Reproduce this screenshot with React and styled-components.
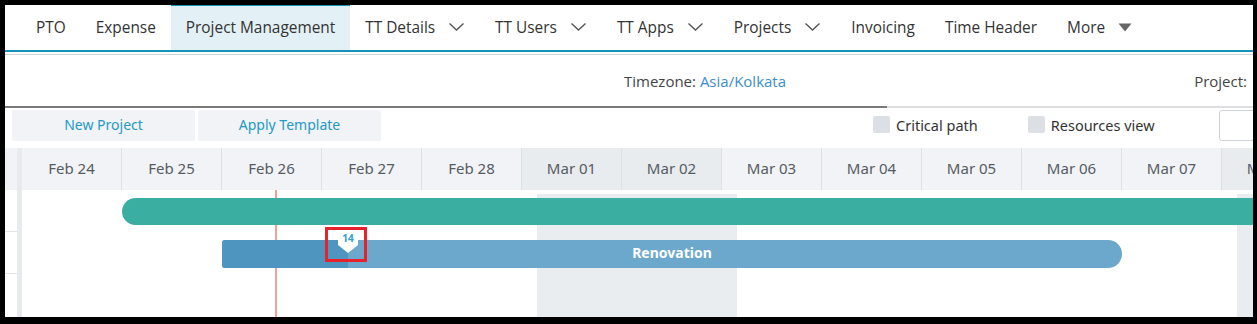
import React from "react";
import styled, { createGlobalStyle } from "styled-components";

const GlobalStyle = createGlobalStyle`
  html, body { margin: 0; padding: 0; background: #000; }
  * { box-sizing: border-box; }
`;

const Frame = styled.div`
  width: 1257px;
  height: 324px;
  padding: 5px 4px 7px 5px;
  background: #000;
`;

const Page = styled.div`
  width: 1248px;
  height: 312px;
  background: #fff;
  display: flex;
  flex-direction: column;
  overflow: hidden;
  font-family: "Open Sans", "Noto Sans", sans-serif;
`;

const Nav = styled.nav`
  display: flex;
  align-items: stretch;
  height: 47px;
  padding-left: 16px;
  border-bottom: 2px solid #1592b8;
  flex-shrink: 0;
`;

const NavItem = styled.div`
  display: flex;
  align-items: center;
  gap: 13px;
  padding: 0 15px 2px;
  font-size: 15.4px;
  color: #333;
  white-space: nowrap;
  flex-shrink: 0;
  background: ${(p) => (p.$active ? "#e3f1f6" : "transparent")};
  border-top: 1px solid ${(p) => (p.$active ? "#1592b8" : "transparent")};
`;

const Chevron = () => (
  <svg width="17" height="10" viewBox="0 0 17 10">
    <polyline points="1.5,1.5 8.5,8 15.5,1.5" fill="none" stroke="#555" strokeWidth="1.4" />
  </svg>
);

const Caret = () => (
  <svg width="14" height="9" viewBox="0 0 14 9">
    <polygon points="0.5,0.5 13.5,0.5 7,8.5" fill="#666" />
  </svg>
);

const ThinRule = styled.div`
  height: 1px;
  margin-top: 2px;
  background: #d4d4d4;
  flex-shrink: 0;
`;

const InfoRow = styled.div`
  display: flex;
  align-items: center;
  height: 51px;
  font-size: 15px;
  color: #444;
  flex-shrink: 0;
`;

const Timezone = styled.div`
  margin-left: 619px;
`;

const TzLink = styled.span`
  color: #3c8dc9;
`;

const ProjectLabel = styled.div`
  margin-left: auto;
  margin-right: 6px;
`;

const SplitRule = styled.div`
  display: flex;
  height: 2px;
  flex-shrink: 0;
`;

const RulePart = styled.div`
  height: 100%;
  width: ${(p) => p.$w};
  flex: ${(p) => (p.$grow ? 1 : "none")};
  background: ${(p) => p.$c};
`;

const Toolbar = styled.div`
  display: flex;
  align-items: flex-start;
  height: 40px;
  padding: 2px 0 0 7px;
  font-family: "Noto Sans", sans-serif;
  flex-shrink: 0;
  & > * { flex-shrink: 0; }
`;

const ToolButton = styled.div`
  width: 183px;
  height: 31px;
  margin-right: 3px;
  padding-bottom: 2px;
  display: flex;
  align-items: center;
  justify-content: center;
  background: #f2f3f6;
  border-radius: 2px;
  color: #1d9ac6;
  font-size: 14px;
`;

const CheckOption = styled.div`
  display: flex;
  align-items: center;
  gap: 6px;
  height: 31px;
  padding-bottom: 2px;
  margin-left: ${(p) => p.$ml}px;
  font-size: 14.5px;
  color: #333;
  white-space: nowrap;
`;

const CheckBox = styled.span`
  width: 17px;
  height: 17px;
  border-radius: 2px;
  background: #dcdfe3;
`;

const SearchBox = styled.div`
  width: 120px;
  height: 31px;
  margin-left: 64px;
  border: 1px solid #cfd4da;
  border-radius: 3px;
  background: #fff;
`;

const Gantt = styled.div`
  display: flex;
  flex: 1;
  font-family: "Noto Sans", sans-serif;
  min-height: 0;
`;

const LeftPane = styled.div`
  width: 12px;
  display: flex;
  flex-direction: column;
  flex-shrink: 0;
`;

const LeftHead = styled.div`
  height: 42px;
  background: #f2f3f6;
`;

const LeftRow = styled.div`
  height: 42px;
  border-bottom: 1px solid #e3e5e8;
`;

const Splitter = styled.div`
  width: 5px;
  background: #e8eaee;
  flex-shrink: 0;
`;

const Chart = styled.div`
  flex: 1;
  display: flex;
  flex-direction: column;
  overflow: hidden;
`;

const HeaderRow = styled.div`
  display: flex;
  height: 42px;
  flex-shrink: 0;
`;

const DayCell = styled.div`
  width: 100px;
  flex-shrink: 0;
  display: flex;
  align-items: center;
  justify-content: center;
  padding-bottom: 3px;
  font-size: 15px;
  color: #555b63;
  background: ${(p) => (p.$weekend ? "#e9ecef" : "#f2f3f6")};
  border-right: 1px solid #dcdfe3;
  white-space: nowrap;
  overflow: hidden;
`;

const ChartBody = styled.div`
  position: relative;
  flex: 1;
`;

const WeekendShade = styled.div`
  position: absolute;
  top: 4px;
  bottom: 0;
  width: 200px;
  background: #eaedf0;
`;

const TodayLine = styled.div`
  position: absolute;
  top: 0;
  bottom: 0;
  left: 253px;
  width: 1.5px;
  background: #f3a198;
`;

const SummaryBar = styled.div`
  position: absolute;
  left: 100px;
  top: 8px;
  width: 1200px;
  height: 27px;
  border-radius: 14px;
  background: #3aafa1;
`;

const TaskBar = styled.div`
  position: absolute;
  left: 200px;
  top: 50px;
  width: 900px;
  height: 28px;
  padding-bottom: 3px;
  border-radius: 3px 14px 14px 3px;
  background: #6ca8cc;
  overflow: hidden;
  display: flex;
  align-items: center;
  justify-content: center;
`;

const Progress = styled.div`
  position: absolute;
  left: 0;
  top: 0;
  bottom: 0;
  background: #4e96c0;
`;

const TaskLabel = styled.span`
  position: relative;
  color: #fff;
  font-weight: 700;
  font-size: 14px;
`;

const Marker = styled.div`
  position: absolute;
  left: 316px;
  top: 42px;
  width: 20px;
  height: 21px;
  background: #fff;
  clip-path: polygon(0 0, 100% 0, 100% 62%, 50% 100%, 0 62%);
  display: flex;
  justify-content: center;
  padding-top: 1px;
  font-size: 10px;
  font-weight: 700;
  color: #2d9fd0;
  line-height: 11px;
`;

const Highlight = styled.div`
  position: absolute;
  left: 303px;
  top: 37px;
  width: 42px;
  height: 35px;
  border: 3px solid #e8212a;
`;

const days = [
  ["Feb 24"], ["Feb 25"], ["Feb 26"], ["Feb 27"], ["Feb 28"],
  ["Mar 01", true], ["Mar 02", true], ["Mar 03"], ["Mar 04"], ["Mar 05"],
  ["Mar 06"], ["Mar 07"], ["Mar 08", true],
];

const navItems = [
  { label: "PTO" },
  { label: "Expense" },
  { label: "Project Management", active: true },
  { label: "TT Details", chevron: true },
  { label: "TT Users", chevron: true },
  { label: "TT Apps", chevron: true },
  { label: "Projects", chevron: true },
  { label: "Invoicing" },
  { label: "Time Header" },
  { label: "More", caret: true },
];

export default function App() {
  return (
    <Frame>
      <GlobalStyle />
      <Page>
        <Nav>
          {navItems.map((n) => (
            <NavItem key={n.label} $active={n.active}>
              {n.label}
              {n.chevron && <Chevron />}
              {n.caret && <Caret />}
            </NavItem>
          ))}
        </Nav>
        <ThinRule />
        <InfoRow>
          <Timezone>
            Timezone: <TzLink>Asia/Kolkata</TzLink>
          </Timezone>
          <ProjectLabel>Project:</ProjectLabel>
        </InfoRow>
        <SplitRule>
          <RulePart $w="882px" $c="#7a7a7a" />
          <RulePart $grow $c="#dedede" />
        </SplitRule>
        <Toolbar>
          <ToolButton>New Project</ToolButton>
          <ToolButton>Apply Template</ToolButton>
          <CheckOption $ml={489}>
            <CheckBox />
            Critical path
          </CheckOption>
          <CheckOption $ml={50}>
            <CheckBox />
            Resources view
          </CheckOption>
          <SearchBox />
        </Toolbar>
        <Gantt>
          <LeftPane>
            <LeftHead />
            <LeftRow />
            <LeftRow />
          </LeftPane>
          <Splitter />
          <Chart>
            <HeaderRow>
              {days.map(([d, w]) => (
                <DayCell key={d} $weekend={w}>
                  {d}
                </DayCell>
              ))}
            </HeaderRow>
            <ChartBody>
              <WeekendShade style={{ left: 515 }} />
              <WeekendShade style={{ left: 1215 }} />
              <TodayLine />
              <SummaryBar />
              <TaskBar>
                <Progress style={{ width: "14%" }} />
                <TaskLabel>Renovation</TaskLabel>
              </TaskBar>
              <Marker>14</Marker>
              <Highlight />
            </ChartBody>
          </Chart>
        </Gantt>
      </Page>
    </Frame>
  );
}
